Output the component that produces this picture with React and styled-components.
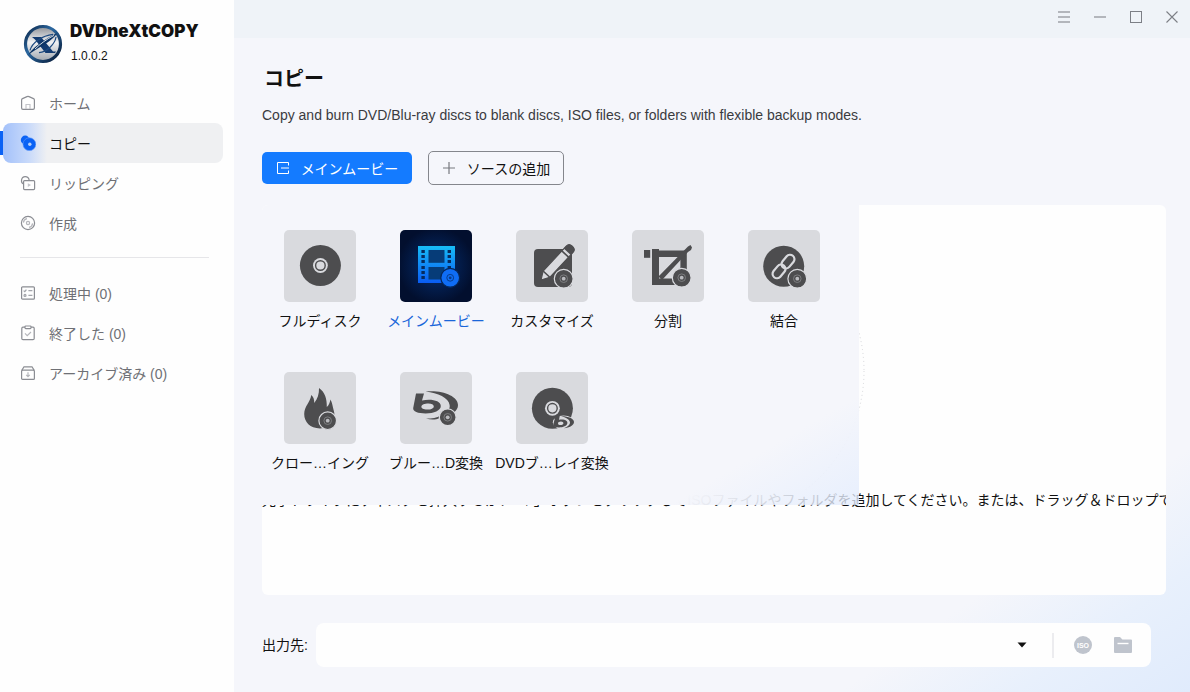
import React, { useState } from "react";
import styled, { createGlobalStyle } from "styled-components";

const menu = [
  { id: "home", label: "ホーム" },
  { id: "copy", label: "コピー" },
  { id: "rip", label: "リッピング" },
  { id: "create", label: "作成" },
];

const tasks = [
  { id: "process", label: "処理中 (0)" },
  { id: "done", label: "終了した (0)" },
  { id: "archive", label: "アーカイブ済み (0)" },
];

const modes = [
  { id: "full", label: "フルディスク" },
  { id: "main", label: "メインムービー" },
  { id: "custom", label: "カスタマイズ" },
  { id: "split", label: "分割" },
  { id: "merge", label: "結合" },
  { id: "clone", label: "クロー…イング" },
  { id: "bd2dvd", label: "ブルー…D変換" },
  { id: "dvd2bd", label: "DVDブ…レイ変換" },
];

const dark = "#4d4d4f";
const light = "#d9dade";

function NavIcon({ id }) {
  return (
    <svg width="16" height="16" viewBox="0 0 16 16" fill="none" stroke="#8b8d93" strokeWidth="1.2">
      {id === "home" && (
        <>
          <path d="M1.6 5 Q1.6 4 2.5 3.6 L7 1.6 Q8 1.2 9 1.6 L13.5 3.6 Q14.4 4 14.4 5 V13 Q14.4 14.4 13 14.4 H3 Q1.6 14.4 1.6 13 Z" />
          <path d="M6 14 V9.5 H10 V14" stroke="#c3c4c9" />
        </>
      )}
      {id === "copy" && (
        <g stroke="none" fill="#0a62f5">
          <circle cx="5.2" cy="5" r="4.4" />
          <circle cx="9.4" cy="9.2" r="6.4" stroke="#5f97f8" strokeWidth="0.6" />
          <circle cx="9.8" cy="9.2" r="1.7" fill="#b4cffb" />
        </g>
      )}
      {id === "rip" && (
        <>
          <rect x="3.6" y="5.6" width="11" height="9" rx="1" />
          <path d="M3.4 9 C0.5 8 0.8 1.6 5.2 1.6 C7.6 1.6 8.8 3 9.2 5.2" />
          <path d="M7.8 8.2 L11 10.1 L7.8 12 Z" fill="#c3c4c9" stroke="none" />
        </>
      )}
      {id === "create" && (
        <>
          <circle cx="8" cy="8" r="6.6" />
          <circle cx="8" cy="8" r="1.6" stroke="#b5b6bb" />
          <path d="M3.4 7.6 C3.6 5.6 5.2 4 7 3.6 M12.6 8.4 C12.4 10.4 10.8 12 9 12.4" stroke="#b5b6bb" />
        </>
      )}
      {id === "process" && (
        <>
          <rect x="1.6" y="1.8" width="12.8" height="12.4" rx="1" />
          <path d="M3.6 5.6 L4.8 6.6 L6.4 4.6 M8.4 5.7 H12.4 M8.4 10.4 H12.4" stroke="#a3a5ab" />
          <circle cx="5" cy="10.4" r="1" stroke="#a3a5ab" />
        </>
      )}
      {id === "done" && (
        <>
          <rect x="1.8" y="2.2" width="12.4" height="12.4" rx="1.2" />
          <rect x="5" y="1" width="6" height="2.6" rx="0.8" fill="#fff" />
          <path d="M5 8.4 L7.2 10.6 L11 7" stroke="#b5b6bb" />
        </>
      )}
      {id === "archive" && (
        <>
          <rect x="1.6" y="5.2" width="12.8" height="9.2" rx="1" />
          <path d="M1.8 5.4 L4 1.8 H12 L14.2 5.4" />
          <path d="M8 7.2 V11.4 M6.2 9.8 L8 11.6 L9.8 9.8" stroke="#b5b6bb" />
        </>
      )}
    </svg>
  );
}

function Logo() {
  return (
    <svg width="40" height="40" viewBox="0 0 40 40">
      <defs>
        <linearGradient id="logoFill" x1="0" y1="0" x2="0" y2="1">
          <stop offset="0" stopColor="#8d9096" />
          <stop offset="0.45" stopColor="#f1f2f4" />
          <stop offset="1" stopColor="#9fa5ad" />
        </linearGradient>
        <linearGradient id="logoRing" x1="0" y1="0" x2="1" y2="1">
          <stop offset="0" stopColor="#0b2547" />
          <stop offset="0.4" stopColor="#2c68a0" />
          <stop offset="1" stopColor="#061733" />
        </linearGradient>
      </defs>
      <circle cx="20" cy="20" r="17.5" fill="url(#logoFill)" stroke="url(#logoRing)" strokeWidth="3.2" />
      <path d="M9 13 H18 L30 27.6 H33 L32 29 H22.5 L12 15.4 Z" fill="#123a70" />
      <path d="M5.5 31 C8 25.5 15 20.6 21 16.4 C26 13 30 10.6 34 9.4 C31 14 24 19 18 22.6 C13 25.6 9 28 5.5 31 Z" fill="#0d3566" />
      <path d="M16 28.6 C24 28 32 20 33 13 M7 26.4 C9 19 19 11.6 30 10.4" stroke="#1d4a80" strokeWidth="1.2" fill="none" />
      <path d="M12 25 C17 20 24 15 31 11.4" stroke="#e8edf3" strokeWidth="0.9" fill="none" />
    </svg>
  );
}

function MiniDisc({ x, y, r = 9 }) {
  return (
    <g>
      <circle cx={x} cy={y} r={r + 0.4} fill={dark} stroke={light} strokeWidth="1.2" />
      <circle cx={x} cy={y} r="3.8" fill="none" stroke="#88898c" strokeWidth="0.8" />
      <circle cx={x} cy={y} r="1.9" fill="#b9babe" />
    </g>
  );
}

function ModeIcon({ id }) {
  return (
    <svg width="72" height="72" viewBox="0 0 72 72">
      {id === "full" && (
        <>
          <circle cx="36.4" cy="35.5" r="20.5" fill={dark} />
          <circle cx="36.4" cy="35.5" r="7.4" fill={light} />
          <circle cx="36.4" cy="35.5" r="4.8" fill="none" stroke={dark} strokeWidth="1.4" />
        </>
      )}
      {id === "main" && (
        <>
          <defs>
            <linearGradient id="film" x1="0" y1="0" x2="0" y2="1">
              <stop offset="0" stopColor="#17bdf6" />
              <stop offset="0.45" stopColor="#118ff5" />
              <stop offset="1" stopColor="#0a5cf2" />
            </linearGradient>
          </defs>
          <rect x="18" y="16" width="37" height="37" fill="url(#film)" />
          <rect x="28.5" y="20" width="16" height="12.8" fill="#063c78" />
          <rect x="28.5" y="37" width="16" height="12.5" fill="#063c78" />
          {[20, 25, 30, 36, 41, 46].map((y) => (
            <g key={y} fill="#052a5e">
              <rect x="21.4" y={y} width="3.4" height="3" />
              <rect x="47.6" y={y} width="3.4" height="3" />
            </g>
          ))}
          <circle cx="50.2" cy="47.8" r="9.4" fill="#0f6df5" stroke="#04265a" strokeWidth="1.2" />
          <circle cx="50.2" cy="47.8" r="3.4" fill="none" stroke="#063c8c" />
          <circle cx="50.2" cy="47.8" r="1.4" fill="#063c8c" />
        </>
      )}
      {id === "custom" && (
        <>
          <rect x="18" y="19" width="38" height="38" rx="4" fill={dark} />
          <g transform="translate(25 50) rotate(-47)">
            <path d="M0 0 L8 -4.6 H42 Q46 -4.6 46 0 Q46 4.6 42 4.6 H8 Z" fill={light} stroke={dark} strokeWidth="1.2" />
            <path d="M38.5 -4.8 H42 Q46.4 -4.8 46.4 0 Q46.4 4.8 42 4.8 H38.5 Z" fill={dark} />
            <path d="M8 -4.6 V4.6 M35.5 -4.6 V4.6" stroke={dark} strokeWidth="1.6" />
          </g>
          <MiniDisc x={47.7} y={48.7} />
        </>
      )}
      {id === "split" && (
        <g fill={dark}>
          <rect x="12" y="20" width="6.2" height="7.8" />
          <path d="M20 19 H27 V20.4 H54.8 V55 H20 Z M27 27 V48.6 H48.4 V27 Z" fillRule="evenodd" />
          <path d="M26.5 46.5 L53 19.5 L56 16.5 L58.5 15 L60 17.5 L59 20 L56 22 L30 50 Z" />
          <MiniDisc x={49.7} y={47.7} />
        </g>
      )}
      {id === "merge" && (
        <>
          <circle cx="35.7" cy="36.3" r="20.5" fill={dark} />
          <g fill="none" stroke={light} strokeWidth="2.2">
            <rect x="-7.6" y="-4.4" width="15.2" height="8.8" rx="4.4" transform="translate(40 31.6) rotate(-50)" />
            <rect x="-7.6" y="-4.4" width="15.2" height="8.8" rx="4.4" transform="translate(31 41.4) rotate(-50)" />
          </g>
          <MiniDisc x={49.3} y={48.7} />
        </>
      )}
      {id === "clone" && (
        <>
          <path
            d="M35 16 C41 20 43 27 42.8 35 C45 33 46 30 46.4 27.4 C48.4 31 48.6 34 49.6 38 C53 49 46 56.4 36 56.4 C26 56.4 20.2 50 20.2 42 C20.2 34 26.6 30 27.2 23 C29.4 24.6 30.4 27.6 30.2 31 C33.6 27 35.2 22 35 16 Z"
            fill={dark}
          />
          <MiniDisc x={43.7} y={48.7} r={8.4} />
        </>
      )}
      {id === "bd2dvd" && (
        <>
          <path
            d="M16 21.4 H24 L22 28.6 C31 26.6 40.8 28.6 40.8 34 C40.8 38.6 34 41.4 25.6 41.4 C18 41.4 12.6 39.6 13.2 36 Z M28.4 31.4 C24.6 31.4 21.6 32.6 21.4 34.6 C21.2 36.4 23.6 37.6 27 37.6 C31 37.6 33.8 36.2 33.8 34.4 C33.8 32.6 31.6 31.4 28.4 31.4 Z"
            fill={dark}
            fillRule="evenodd"
          />
          <path d="M25.6 19.6 C42 17.8 58 24 58 33 C58 36 56.6 38.4 54 40.4 L48.4 38 C49.4 36.6 50 35 49.6 33 C48.6 26 38 21 25.6 19.6 Z" fill={dark} />
          <path d="M26 46.6 C32 46.6 37 45.6 40.6 43.4 L39.4 46 C36 48 31 48 26 46.6 Z" fill={dark} />
          <MiniDisc x={47.7} y={45.3} r={8} />
        </>
      )}
      {id === "dvd2bd" && (
        <>
          <circle cx="36.4" cy="36.3" r="20.5" fill={dark} />
          <circle cx="36.4" cy="36.3" r="7.4" fill={light} />
          <circle cx="36.4" cy="36.3" r="4.8" fill="none" stroke={dark} strokeWidth="1.4" />
          <ellipse cx="47.6" cy="50.4" rx="10.8" ry="6.8" fill={light} />
          <path
            d="M39.6 43.8 H43.8 L43 47.8 C47.4 46.8 51.6 48 51.4 51 C51.2 54 47 55.4 43 55.4 C39.4 55.4 37 54.2 37.4 52 Z M45 49.6 C43.4 49.6 42 50.4 42 51.4 C42 52.6 43.2 53 44.4 53 C46.2 53 47.4 52.2 47.4 51.2 C47.4 50.4 46.4 49.6 45 49.6 Z"
            fill={dark}
            fillRule="evenodd"
          />
          <path d="M45 44.2 C52 44 58 46.4 58 50 C58 53.2 53.4 55.8 48 56.2 C52 54.6 54.2 52.6 54 50.4 C53.8 47.6 50 45.2 45 44.2 Z" fill={dark} />
        </>
      )}
    </svg>
  );
}

function App() {
  const [page, setPage] = useState("copy");
  const [mode, setMode] = useState("main");

  return (
    <>
      <GlobalStyle />
      <Window>
        <Sidebar>
          <Brand>
            <Logo />
            <div>
              <BrandName>DVDneXtCOPY</BrandName>
              <Version>1.0.0.2</Version>
            </div>
          </Brand>
          <Nav>
            {menu.map((item) => (
              <NavItem key={item.id} $active={page === item.id} onClick={() => setPage(item.id)}>
                <NavIcon id={item.id} />
                {item.label}
              </NavItem>
            ))}
          </Nav>
          <Divider />
          <Nav>
            {tasks.map((item) => (
              <NavItem key={item.id} $active={page === item.id} onClick={() => setPage(item.id)}>
                <NavIcon id={item.id} />
                {item.label}
              </NavItem>
            ))}
          </Nav>
        </Sidebar>

        <Main>
          <TitleBar>
            <WindowButton aria-label="メニュー">
              <svg width="12" height="12" stroke="#b3b6bc" strokeWidth="2">
                <path d="M0 1 H12 M0 6 H12 M0 11 H12" />
              </svg>
            </WindowButton>
            <WindowButton aria-label="最小化">
              <svg width="12" height="12" stroke="#b3b6bc" strokeWidth="2">
                <path d="M0 6 H12" />
              </svg>
            </WindowButton>
            <WindowButton aria-label="最大化">
              <svg width="12" height="12" fill="none" stroke="#7c7f86">
                <rect x="0.5" y="0.5" width="11" height="11" />
              </svg>
            </WindowButton>
            <WindowButton aria-label="閉じる">
              <svg width="12" height="12" stroke="#7c7f86" strokeWidth="1.1">
                <path d="M0.5 0.5 L11.5 11.5 M11.5 0.5 L0.5 11.5" />
              </svg>
            </WindowButton>
          </TitleBar>

          <Content>
            <Title>コピー</Title>
            <Description>
              Copy and burn DVD/Blu-ray discs to blank discs, ISO files, or folders with flexible backup modes.
            </Description>
            <Actions>
              <PrimaryButton>
                <svg width="12" height="12" fill="none" stroke="#fff">
                  <path d="M11.5 3.5 V0.5 H0.5 V11.5 H11.5 V8.5 M4 6 H12" />
                </svg>
                メインムービー
              </PrimaryButton>
              <OutlineButton>
                <svg width="12" height="12" stroke="#77797f" strokeWidth="1.2">
                  <path d="M0 6 H12 M6 0 V12" />
                </svg>
                ソースの追加
              </OutlineButton>
            </Actions>

            <DropArea>
              <DropRing width="302" height="270" viewBox="0 0 302 270">
                <circle cx="151" cy="151" r="150" fill="none" stroke="#d5d6da" strokeDasharray="1 3" />
              </DropRing>
              <DropText>
                光学ドライブにディスクを挿入するか、「＋」ボタンをクリックしてISOファイルやフォルダを追加してください。または、ドラッグ＆ドロップで
              </DropText>
              <ModeMenu>
                {modes.map((item) => (
                  <ModeItem key={item.id} $active={mode === item.id} onClick={() => setMode(item.id)}>
                    <ModeTile $active={item.id === "main"}>
                      <ModeIcon id={item.id} />
                    </ModeTile>
                    {item.label}
                  </ModeItem>
                ))}
              </ModeMenu>
            </DropArea>

            <Output>
              <OutputLabel htmlFor="output">出力先:</OutputLabel>
              <OutputBox>
                <OutputSelect id="output">
                  <option></option>
                </OutputSelect>
                <Arrow width="10" height="6" viewBox="0 0 10 6">
                  <path d="M0.5 0.5 H9.5 L5 5.5 Z" fill="#111" />
                </Arrow>
                <Separator />
                <IconButton aria-label="ISO">
                  <svg width="20" height="20" viewBox="0 0 20 20">
                    <circle cx="10" cy="10" r="9" fill="#bfc4cd" />
                    <text x="10" y="12.6" textAnchor="middle" fontSize="7" fontWeight="700" fill="#fff" fontFamily="Liberation Sans, sans-serif">
                      ISO
                    </text>
                  </svg>
                </IconButton>
                <IconButton aria-label="フォルダ">
                  <svg width="20" height="20" viewBox="0 0 20 20">
                    <path d="M1 3 Q1 2 2 2 H7 L9.4 4.6 H18 Q19 4.6 19 5.6 V17 Q19 18 18 18 H2 Q1 18 1 17 Z" fill="#bfc4cd" />
                    <path d="M4.5 8.5 H15.5" stroke="#fff" strokeWidth="1.4" />
                  </svg>
                </IconButton>
              </OutputBox>
            </Output>
          </Content>
        </Main>
      </Window>
    </>
  );
}

const GlobalStyle = createGlobalStyle`
  * {
    box-sizing: border-box;
  }

  body {
    margin: 0;
    font-family: "Liberation Sans", "Noto Sans CJK JP", sans-serif;
    font-size: 14px;
    color: #111;
  }

  button {
    font: inherit;
    border: none;
    background: none;
    padding: 0;
    cursor: pointer;
  }
`;

const Window = styled.div`
  display: flex;
  min-height: 100vh;
`;

const Sidebar = styled.aside`
  flex: none;
  width: 234px;
  background: #fefefe;
`;

const Brand = styled.div`
  display: flex;
  align-items: center;
  gap: 7px;
  height: 83px;
  padding: 4px 0 0 23px;
`;

const BrandName = styled.div`
  font-family: Inter, sans-serif;
  font-size: 17px;
  font-weight: 900;
  line-height: 24px;
`;

const Version = styled.div`
  padding: 1px 0 0 1px;
  font-size: 12px;
  line-height: 24px;
`;

const Nav = styled.nav`
  display: flex;
  flex-direction: column;
  padding: 0 11px 0 3px;
`;

const NavItem = styled.button`
  position: relative;
  display: flex;
  align-items: center;
  gap: 13px;
  height: 40px;
  padding: 0 0 1px 17px;
  border-radius: 8px;
  text-align: left;
  color: ${({ $active }) => ($active ? "#111" : "#6f7075")};
  background: ${({ $active }) => ($active ? "linear-gradient(90deg, #a3c1fa 0, #c9dafa 26px, #eff0f2 44px)" : "none")};

  &::before {
    content: "";
    display: ${({ $active }) => ($active ? "block" : "none")};
    position: absolute;
    left: -3px;
    top: 8px;
    width: 3px;
    height: 24px;
    background: #0a62f5;
  }
`;

const Divider = styled.hr`
  margin: 14px 25px 15px 20px;
  border: none;
  border-top: 1px solid #e6e6e9;
`;

const Main = styled.main`
  flex: 1;
  min-width: 0;
  display: flex;
  flex-direction: column;
  background: linear-gradient(145deg, #f5f6fb 82%, #e8f0fc 91%, #e0ebfc 100%);
`;

const TitleBar = styled.header`
  display: flex;
  justify-content: flex-end;
  gap: 12px;
  height: 38px;
  padding: 5px 6px 0 0;
  background: #eff3f8;
`;

const WindowButton = styled.button`
  display: grid;
  place-items: center;
  width: 24px;
  height: 24px;
`;

const Content = styled.div`
  flex: 1;
  display: flex;
  flex-direction: column;
  padding: 25px 24px 25px 28px;
`;

const Title = styled.h1`
  margin: 0;
  padding-left: 2px;
  font-size: 20px;
  line-height: 32px;
`;

const Description = styled.p`
  margin: 10px 0 25px;
  line-height: 21px;
  color: #3a3b3f;
`;

const Actions = styled.div`
  display: flex;
  align-items: center;
  gap: 16px;
`;

const PrimaryButton = styled.button`
  display: flex;
  align-items: center;
  justify-content: center;
  gap: 12px;
  width: 150px;
  height: 32px;
  padding: 0 0 1px 1px;
  border-radius: 5px;
  color: #fff;
  background: #147bff;
`;

const OutlineButton = styled(PrimaryButton)`
  width: 136px;
  height: 34px;
  border: 1px solid #84868c;
  color: #111;
  background: none;
`;

const DropArea = styled.section`
  position: relative;
  flex: 1;
  display: flex;
  flex-direction: column;
  align-items: center;
  min-height: 390px;
  margin-top: 20px;
  border-radius: 6px;
  overflow: hidden;
  background: #fefefe;
`;

const DropRing = styled.svg`
  flex: none;
  margin-top: 15px;
`;

const DropText = styled.p`
  align-self: stretch;
  margin: 0;
  line-height: 20px;
  white-space: nowrap;
`;

const ModeMenu = styled.div`
  position: absolute;
  top: 0;
  left: 0;
  display: grid;
  grid-template-columns: repeat(5, 116px);
  row-gap: 38px;
  width: 597px;
  height: 300px;
  padding-top: 25px;
  align-content: start;
  background: linear-gradient(150deg, #f5f6fb 83%, rgba(224, 234, 253, 0.75) 100%);
`;

const ModeItem = styled.button`
  display: flex;
  flex-direction: column;
  align-items: center;
  gap: 8px;
  height: 104px;
  line-height: 22px;
  white-space: nowrap;
  color: ${({ $active }) => ($active ? "#1a66d9" : "#111")};
`;

const ModeTile = styled.span`
  display: block;
  width: 72px;
  height: 72px;
  border-radius: 5px;
  overflow: hidden;
  background: ${({ $active }) => ($active ? "radial-gradient(circle, #073478 0%, #031c4a 45%, #020f2e 75%)" : "#d9dade")};
`;

const Output = styled.div`
  display: flex;
  align-items: center;
  gap: 8px;
  margin: 28px 15px 0 0;
`;

const OutputLabel = styled.label`
  padding-bottom: 2px;
`;

const OutputBox = styled.div`
  flex: 1;
  display: flex;
  align-items: center;
  height: 44px;
  padding-right: 18px;
  border-radius: 8px;
  background: #fefefe;
`;

const OutputSelect = styled.select`
  flex: 1;
  height: 44px;
  padding: 0 40px 0 12px;
  border: none;
  appearance: none;
  font: inherit;
  background: transparent;
`;

const Arrow = styled.svg`
  margin: 0 25px 0 -10px;
  pointer-events: none;
`;

const Separator = styled.span`
  width: 2px;
  height: 25px;
  background: #ececef;
`;

const IconButton = styled.button`
  display: flex;
  margin-left: 20px;

  ${Separator} + & {
    margin-left: 19px;
  }
`;

export default App;
